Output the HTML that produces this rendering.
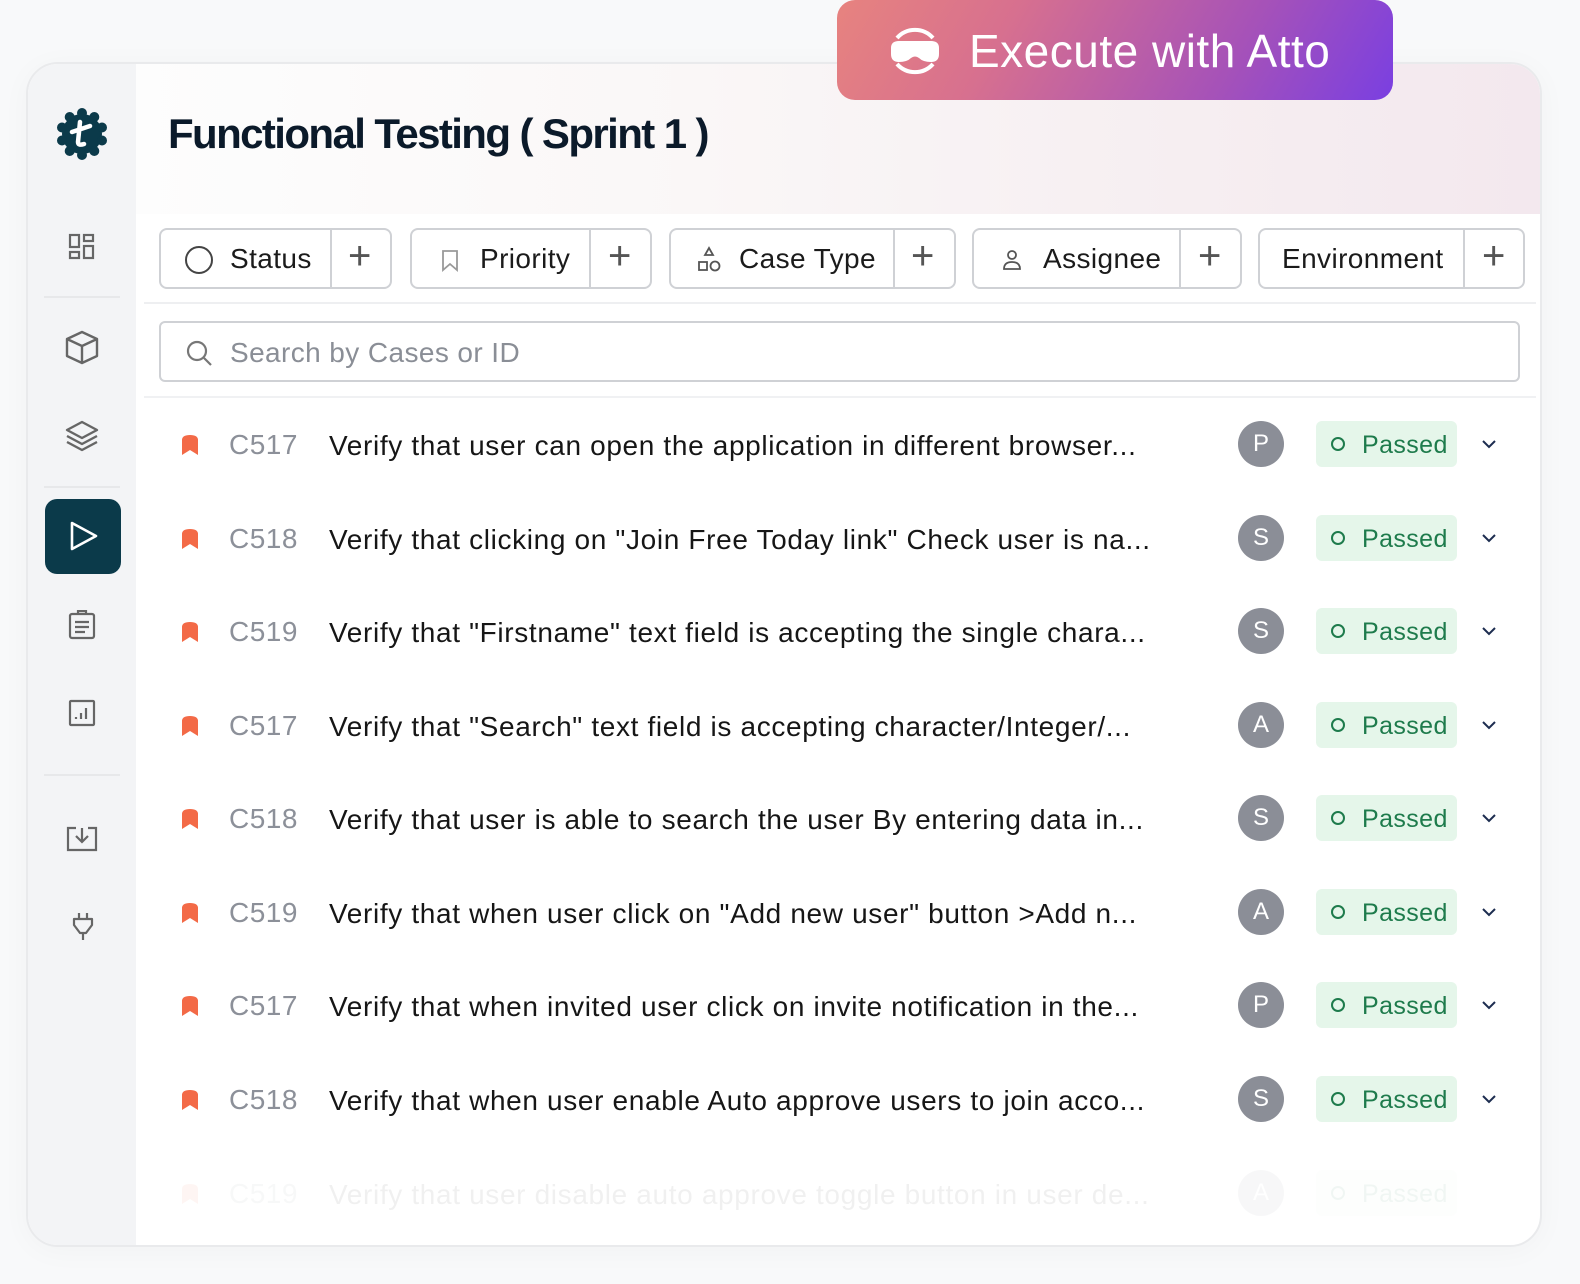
<!DOCTYPE html>
<html><head><meta charset="utf-8">
<style>
*{margin:0;padding:0;box-sizing:border-box}
body{width:1580px;height:1284px;background:#f8f9fa;font-family:"Liberation Sans",sans-serif;position:relative;overflow:hidden}
.card{position:absolute;left:26px;top:62px;width:1516px;height:1185px;border-radius:32px;background:#fff;border:2px solid #e9eaec;overflow:hidden;box-shadow:0 4px 30px rgba(0,0,0,0.03)}
.side{position:absolute;left:0;top:0;width:108px;height:100%;background:#f3f4f6}
.hdr{position:absolute;left:108px;top:0;right:0;height:150px;background:linear-gradient(90deg,#fdfdfd 0%,#faf7f7 40%,#f6eef1 75%,#f3e8ee 100%)}
.abs{position:absolute}
.title{left:168px;top:110px;font-size:42px;font-weight:bold;color:#0b1a2a;letter-spacing:-1.6px}
.btn{left:837px;top:0;width:556px;height:100px;border-radius:18px;background:linear-gradient(120deg,#e7837f 0%,#d7708f 30%,#a652b8 70%,#7a3fe1 100%)}
.btn span{position:absolute;left:132px;top:24px;color:#fff;font-size:46px;letter-spacing:0.5px}
.chip{position:absolute;top:228px;height:61px;border:2px solid #cfd1d5;border-radius:8px;background:#fff;font-size:28px;color:#1b1b1b;letter-spacing:0.4px}
.chip .t{position:absolute;top:13px}
.chip .d{position:absolute;top:0;bottom:0;width:2px;background:#cfd1d5}
.chip .p{position:absolute;top:4px;font-size:40px;color:#555;font-weight:300}
.search{left:159px;top:321px;width:1361px;height:61px;border:2px solid #cfd1d5;border-radius:6px;background:#fff}
.row{position:absolute;left:134px;width:1400px;height:60px}
.row .bk{position:absolute;left:47px;top:19px}
.row .id{position:absolute;left:95px;top:14px;font-size:28px;color:#8c9099;letter-spacing:0.5px}
.row .tx{position:absolute;left:195px;top:15px;font-size:28px;color:#161616;white-space:nowrap;letter-spacing:0.65px}
.row .av{position:absolute;left:1104px;top:6px;width:46px;height:46px;border-radius:50%;background:#8b8e97;color:#fff;font-size:24px;text-align:center;line-height:46px}
.row .bd{position:absolute;left:1182px;top:6px;width:141px;height:46px;border-radius:6px;background:#e5f6ea;color:#1e7b4c;font-size:25px;letter-spacing:0.4px}
.row .bd i{position:absolute;left:15px;top:16px;width:14px;height:14px;border:2px solid #1e7b4c;border-radius:50%}
.row .bd span{position:absolute;left:46px;top:10px}
.row .cv{position:absolute;left:1347px;top:24px}
.ln{position:absolute;height:2px;background:#e7e8ea}
</style></head><body>
<div class="card">
 <div class="side"></div>
 <div class="hdr"></div>
</div>
<div class="abs btn">
 <svg class="abs" style="left:48px;top:26px" width="60" height="50" viewBox="0 0 60 50" fill="none">
  <path d="M12 12 A24 24 0 0 1 48 12" stroke="#fff" stroke-width="4"/>
  <path d="M12 38 A24 24 0 0 0 48 38" stroke="#fff" stroke-width="4"/>
  <path d="M6 22 Q6 15 14 15 L46 15 Q54 15 54 22 L54 28 Q54 36 46 36 Q38 36 34 32 Q30 29 26 32 Q22 36 14 36 Q6 36 6 28Z" fill="#fff"/>
 </svg>
 <span>Execute with Atto</span>
</div>
<div class="abs title">Functional Testing ( Sprint 1 )</div>

<svg class="abs" style="left:56px;top:108px" width="52" height="52" viewBox="0 0 52 52">
 <g fill="#0b3a4a"><circle cx="26" cy="26" r="20"/>
 <circle cx="26" cy="5" r="5"/><circle cx="38.3" cy="9" r="5"/><circle cx="46" cy="19.5" r="5"/><circle cx="46" cy="32.5" r="5"/><circle cx="38.3" cy="43" r="5"/><circle cx="26" cy="47" r="5"/><circle cx="13.7" cy="43" r="5"/><circle cx="6" cy="32.5" r="5"/><circle cx="6" cy="19.5" r="5"/><circle cx="13.7" cy="9" r="5"/></g>
 <path d="M24 14 L22 34 Q22 38 28 36 M16 24 L34 18" stroke="#fff" stroke-width="4.5" fill="none" stroke-linecap="round"/>
</svg>
<svg class="abs" style="left:68px;top:233px" width="28" height="28" viewBox="0 0 28 28" fill="none" stroke="#666" stroke-width="2.2">
 <rect x="2" y="2" width="9" height="12"/><rect x="16" y="2" width="9" height="6"/><rect x="2" y="19" width="9" height="6"/><rect x="16" y="13" width="9" height="12"/>
</svg>
<div class="ln" style="left:44px;top:296px;width:76px"></div>
<svg class="abs" style="left:64px;top:329px" width="36" height="36" viewBox="0 0 36 36" fill="none" stroke="#666" stroke-width="2.4" stroke-linejoin="round">
 <path d="M18 3 L33 10 L33 27 L18 34 L3 27 L3 10Z M3 10 L18 17 L33 10 M18 17 L18 34"/>
</svg>
<svg class="abs" style="left:64px;top:418px" width="36" height="36" viewBox="0 0 36 36" fill="none" stroke="#666" stroke-width="2.4" stroke-linejoin="round">
 <path d="M18 4 L33 12 L18 20 L3 12Z M3 18 L18 26 L33 18 M3 24 L18 32 L33 24"/>
</svg>
<div class="ln" style="left:44px;top:486px;width:76px"></div>
<div class="abs" style="left:45px;top:499px;width:76px;height:75px;border-radius:12px;background:#0b3a4a"></div>
<svg class="abs" style="left:68px;top:520px" width="32" height="32" viewBox="0 0 32 32" fill="none" stroke="#fff" stroke-width="2.6" stroke-linejoin="round"><path d="M4 3 L28 16 L4 29Z"/></svg>
<svg class="abs" style="left:68px;top:610px" width="28" height="30" viewBox="0 0 28 30" fill="none" stroke="#666" stroke-width="2.2">
 <rect x="2" y="4" width="24" height="24" rx="2"/><path d="M10 4 L10 1 L18 1 L18 4 M7 12 H21 M7 17 H21 M7 22 H17"/>
</svg>
<svg class="abs" style="left:68px;top:699px" width="28" height="28" viewBox="0 0 28 28" fill="none" stroke="#666" stroke-width="2.2">
 <rect x="2" y="2" width="24" height="24" rx="1"/><path d="M8 20 V18 M13 20 V14 M18 20 V9"/>
</svg>
<div class="ln" style="left:44px;top:774px;width:76px"></div>
<svg class="abs" style="left:66px;top:826px" width="32" height="26" viewBox="0 0 32 26" fill="none" stroke="#666" stroke-width="2.2">
 <path d="M10 2 H2 V24 H30 V2 H22 M16 2 V16 M10 10 L16 16 L22 10"/>
</svg>
<svg class="abs" style="left:72px;top:912px" width="22" height="30" viewBox="0 0 22 30" fill="none" stroke="#666" stroke-width="2.2" stroke-linejoin="round">
 <path d="M7 1 V7 M15 1 V7 M2 7 H20 V13 L14 21 H8 L2 13Z M11 21 V28"/>
</svg>

<div class="chip" style="left:159px;width:233px">
 <svg class="abs" style="left:23px;top:15px" width="30" height="30"><circle cx="15" cy="15" r="13" fill="none" stroke="#444" stroke-width="2"/></svg>
 <span class="t" style="left:69px">Status</span><div class="d" style="left:169px"></div><span class="p" style="left:187px">+</span>
</div>
<div class="chip" style="left:410px;width:242px">
 <svg class="abs" style="left:28px;top:19px" width="20" height="24" viewBox="0 0 20 24" fill="none" stroke="#999" stroke-width="1.8"><path d="M3 2 H17 V21 L10 15 L3 21Z"/></svg>
 <span class="t" style="left:68px">Priority</span><div class="d" style="left:177px"></div><span class="p" style="left:196px">+</span>
</div>
<div class="chip" style="left:669px;width:287px">
 <svg class="abs" style="left:25px;top:16px" width="26" height="28" viewBox="0 0 26 28" fill="none" stroke="#555" stroke-width="1.8"><path d="M13 2 L17 9 H9Z"/><rect x="3" y="16" width="8" height="8"/><circle cx="19" cy="20" r="4.5"/></svg>
 <span class="t" style="left:68px">Case Type</span><div class="d" style="left:222px"></div><span class="p" style="left:240px">+</span>
</div>
<div class="chip" style="left:972px;width:270px">
 <svg class="abs" style="left:27px;top:18px" width="22" height="24" viewBox="0 0 22 24" fill="none" stroke="#555" stroke-width="1.8"><circle cx="11" cy="7" r="4"/><path d="M3 21 Q3 14 11 14 Q19 14 19 21Z"/></svg>
 <span class="t" style="left:69px">Assignee</span><div class="d" style="left:205px"></div><span class="p" style="left:224px">+</span>
</div>
<div class="chip" style="left:1258px;width:267px">
 <span class="t" style="left:22px">Environment</span><div class="d" style="left:203px"></div><span class="p" style="left:222px">+</span>
</div>
<div class="ln" style="left:144px;top:302px;width:1392px;background:#eeeff1"></div>
<div class="abs search">
 <svg class="abs" style="left:24px;top:16px" width="28" height="28" viewBox="0 0 28 28" fill="none" stroke="#777" stroke-width="2.2"><circle cx="12" cy="12" r="9"/><path d="M19 19 L26 26"/></svg>
 <span class="abs" style="left:69px;top:14px;font-size:28px;color:#8a8e96;letter-spacing:0.4px">Search by Cases or ID</span>
</div>
<div class="ln" style="left:144px;top:396px;width:1392px;background:#f0f1f3"></div>

<div class="row" style="top:415px"><svg class="bk" width="18" height="22" viewBox="0 0 18 22"><path d="M1 6 Q1 1 9 1 Q17 1 17 6 V21 L9 16 L1 21Z" fill="#f36a47"/></svg><span class="id">C517</span><span class="tx">Verify that user can open the application in different browser...</span><div class="av">P</div><div class="bd"><i></i><span>Passed</span></div><svg class="cv" width="16" height="10" viewBox="0 0 16 10"><path d="M2 2 L8 8 L14 2" fill="none" stroke="#1d2d50" stroke-width="2"/></svg></div>
<div class="row" style="top:509px"><svg class="bk" width="18" height="22" viewBox="0 0 18 22"><path d="M1 6 Q1 1 9 1 Q17 1 17 6 V21 L9 16 L1 21Z" fill="#f36a47"/></svg><span class="id">C518</span><span class="tx">Verify that clicking on "Join Free Today link" Check user is na...</span><div class="av">S</div><div class="bd"><i></i><span>Passed</span></div><svg class="cv" width="16" height="10" viewBox="0 0 16 10"><path d="M2 2 L8 8 L14 2" fill="none" stroke="#1d2d50" stroke-width="2"/></svg></div>
<div class="row" style="top:602px"><svg class="bk" width="18" height="22" viewBox="0 0 18 22"><path d="M1 6 Q1 1 9 1 Q17 1 17 6 V21 L9 16 L1 21Z" fill="#f36a47"/></svg><span class="id">C519</span><span class="tx">Verify that "Firstname" text field is accepting the single chara...</span><div class="av">S</div><div class="bd"><i></i><span>Passed</span></div><svg class="cv" width="16" height="10" viewBox="0 0 16 10"><path d="M2 2 L8 8 L14 2" fill="none" stroke="#1d2d50" stroke-width="2"/></svg></div>
<div class="row" style="top:696px"><svg class="bk" width="18" height="22" viewBox="0 0 18 22"><path d="M1 6 Q1 1 9 1 Q17 1 17 6 V21 L9 16 L1 21Z" fill="#f36a47"/></svg><span class="id">C517</span><span class="tx">Verify that "Search" text field is accepting character/Integer/...</span><div class="av">A</div><div class="bd"><i></i><span>Passed</span></div><svg class="cv" width="16" height="10" viewBox="0 0 16 10"><path d="M2 2 L8 8 L14 2" fill="none" stroke="#1d2d50" stroke-width="2"/></svg></div>
<div class="row" style="top:789px"><svg class="bk" width="18" height="22" viewBox="0 0 18 22"><path d="M1 6 Q1 1 9 1 Q17 1 17 6 V21 L9 16 L1 21Z" fill="#f36a47"/></svg><span class="id">C518</span><span class="tx">Verify that user is able to search the user By entering data in...</span><div class="av">S</div><div class="bd"><i></i><span>Passed</span></div><svg class="cv" width="16" height="10" viewBox="0 0 16 10"><path d="M2 2 L8 8 L14 2" fill="none" stroke="#1d2d50" stroke-width="2"/></svg></div>
<div class="row" style="top:883px"><svg class="bk" width="18" height="22" viewBox="0 0 18 22"><path d="M1 6 Q1 1 9 1 Q17 1 17 6 V21 L9 16 L1 21Z" fill="#f36a47"/></svg><span class="id">C519</span><span class="tx">Verify that when user click on "Add new user" button &gt;Add n...</span><div class="av">A</div><div class="bd"><i></i><span>Passed</span></div><svg class="cv" width="16" height="10" viewBox="0 0 16 10"><path d="M2 2 L8 8 L14 2" fill="none" stroke="#1d2d50" stroke-width="2"/></svg></div>
<div class="row" style="top:976px"><svg class="bk" width="18" height="22" viewBox="0 0 18 22"><path d="M1 6 Q1 1 9 1 Q17 1 17 6 V21 L9 16 L1 21Z" fill="#f36a47"/></svg><span class="id">C517</span><span class="tx">Verify that when invited user click on invite notification in the...</span><div class="av">P</div><div class="bd"><i></i><span>Passed</span></div><svg class="cv" width="16" height="10" viewBox="0 0 16 10"><path d="M2 2 L8 8 L14 2" fill="none" stroke="#1d2d50" stroke-width="2"/></svg></div>
<div class="row" style="top:1070px"><svg class="bk" width="18" height="22" viewBox="0 0 18 22"><path d="M1 6 Q1 1 9 1 Q17 1 17 6 V21 L9 16 L1 21Z" fill="#f36a47"/></svg><span class="id">C518</span><span class="tx">Verify that when user enable Auto approve users to join acco...</span><div class="av">S</div><div class="bd"><i></i><span>Passed</span></div><svg class="cv" width="16" height="10" viewBox="0 0 16 10"><path d="M2 2 L8 8 L14 2" fill="none" stroke="#1d2d50" stroke-width="2"/></svg></div>
<div class="row" style="top:1164px;opacity:0.06"><svg class="bk" width="18" height="22" viewBox="0 0 18 22"><path d="M1 6 Q1 1 9 1 Q17 1 17 6 V21 L9 16 L1 21Z" fill="#f36a47"/></svg><span class="id">C519</span><span class="tx">Verify that user disable auto approve toggle button in user de...</span><div class="av">A</div><div class="bd"><i></i><span>Passed</span></div></div>
</body></html>
